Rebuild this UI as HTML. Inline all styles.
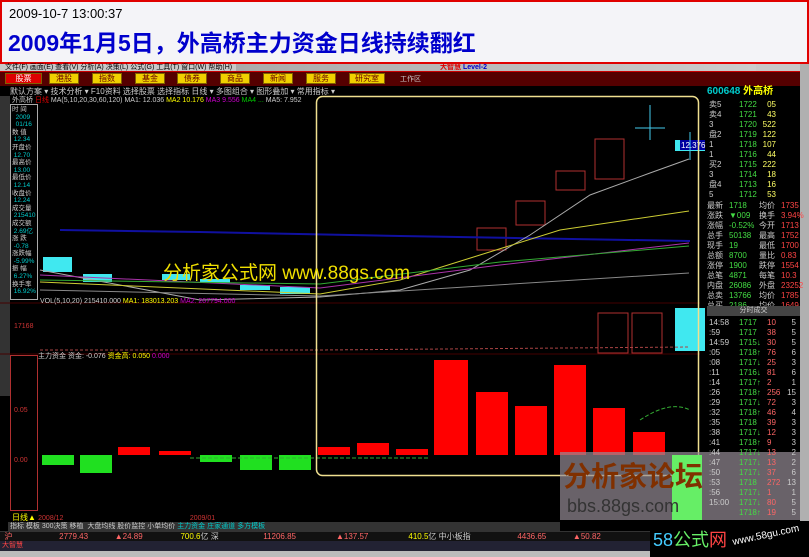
<!DOCTYPE html><html><head><meta charset="utf-8"><style>
*{margin:0;padding:0;box-sizing:border-box}
body{width:809px;height:557px;overflow:hidden;background:#000;position:relative;font-family:"Liberation Sans","Noto Sans CJK SC",sans-serif}
.a{position:absolute;white-space:nowrap}
.s{font-size:8px;line-height:9px}
.btn{position:absolute;top:73px;height:11px;width:30px;background:#f0d000;border:1px solid #806000;font-size:8px;line-height:9px;text-align:center;color:#600}
.rp{position:absolute;left:707px;width:93px;font-size:8px;line-height:10px;height:10px}
.rp span{position:absolute}
</style></head><body>
<div class="a" style="left:0;top:0;width:809px;height:64px;background:#f4f4f8;border:2px solid #e00000"></div>
<div class="a" style="left:9px;top:6px;font-size:13px;font-family:'Liberation Sans Narrow','Liberation Sans',sans-serif;color:#000">2009-10-7 13:00:37</div>
<div class="a" style="left:8px;top:24px;font-size:23px;font-weight:bold;color:#0000cc">2009年1月5日，外高桥主力资金日线持续翻红</div>
<div class="a" style="left:0;top:64px;width:809px;height:8px;background:#c8c8c8"></div>
<div class="a s" style="left:5px;top:63px;color:#000;font-size:7px">文件(F) 画面(E) 查看(V) 分析(A) 决策(L) 公式(G) 工具(T) 窗口(W) 帮助(H)</div>
<div class="a" style="left:236px;top:64px;width:520px;height:7px;background:linear-gradient(90deg,#aaa,#ccc)"></div>
<div class="a s" style="left:440px;top:63px;color:#d00;font-size:7px;font-weight:bold">大智慧 <span style="color:#00c">Level-2</span></div>
<div class="a" style="left:0;top:71px;width:800px;height:15px;background:#500;border-top:1px solid #c00"></div>
<div class="btn" style="left:5px;width:37px;background:#d00;color:#fff">股票</div>
<div class="btn" style="left:49px">港股</div><div class="btn" style="left:92px">指数</div><div class="btn" style="left:135px">基金</div><div class="btn" style="left:177px">债券</div><div class="btn" style="left:220px">商品</div><div class="btn" style="left:263px">新闻</div><div class="btn" style="left:306px">服务</div><div class="btn" style="left:349px;width:36px">研究室</div>
<div class="a s" style="left:400px;top:75px;color:#ccc;font-size:7px">工作区</div>
<div class="a" style="left:800px;top:64px;width:9px;height:480px;background:#b0b0b0"></div>
<div class="a s" style="left:10px;top:87px;color:#ccc">默认方案 ▾ 技术分析 ▾ F10资料 选择股票 选择指标 日线 ▾ 多图组合 ▾ 图形叠加 ▾ 常用指标 ▾</div>
<div class="a s" style="left:12px;top:96px;color:#ccc;font-size:7px">外高桥 <span style="color:#d00">日线</span> MA(5,10,20,30,60,120) MA1: 12.036 <span style="color:#ff0">MA2 10.176</span> <span style="color:#c0c">MA3 9.556</span> <span style="color:#0c0">MA4 ...</span> MA5: 7.952</div>
<div class="a" style="left:0;top:96px;width:10px;height:300px;background:#333"></div>
<div class="a" style="left:10px;top:104px;width:28px;height:196px;border:1px solid #aaa;background:#000"></div>
<div class="a" style="left:12px;top:106px;font-size:6.5px;line-height:7.6px;color:#ccc;white-space:pre">时 间
<span style="color:#0cc">  2009</span>
<span style="color:#0cc">  01/16</span>
数 值
<span style="color:#0cc"> 12.34</span>
开盘价
<span style="color:#0cc"> 12.70</span>
最高价
<span style="color:#0cc"> 13.00</span>
最低价
<span style="color:#0cc"> 12.14</span>
收盘价
<span style="color:#0cc"> 12.24</span>
成交量
<span style="color:#0cc"> 215410</span>
成交额
<span style="color:#0cc"> 2.69亿</span>
涨 跌
<span style="color:#0cc"> -0.78</span>
涨跌幅
<span style="color:#0cc"> -5.99%</span>
振 幅
<span style="color:#0cc"> 6.27%</span>
换手率
<span style="color:#0cc"> 16.92%</span></div>
<svg class="a" style="left:0;top:0" width="809" height="557">
<g fill="#40e8f0"><rect x="43" y="257" width="29" height="15"/><rect x="83" y="274" width="29" height="8"/><rect x="162" y="274" width="28" height="6"/><rect x="200" y="279" width="30" height="4"/><rect x="240" y="285" width="30" height="5"/><rect x="280" y="287" width="30" height="7"/><rect x="675" y="140" width="30" height="11"/><rect x="675" y="308" width="30" height="43"/></g>
<g fill="none" stroke="#b03030"><rect x="477" y="228" width="29" height="22"/><rect x="516" y="201" width="29" height="24"/><rect x="556" y="171" width="29" height="19"/><rect x="595" y="139" width="29" height="40"/><rect x="632" y="313" width="30" height="40"/><rect x="598" y="313" width="30" height="40"/><rect x="10.5" y="355.5" width="27" height="155"/></g>
<rect x="680" y="140" width="25" height="10" fill="#0000a0"/>
<text x="681" y="148" font-size="8" fill="#fff" font-family="Liberation Sans">12.376</text>
<g stroke="#4ce" fill="none"><path d="M635 128H665M650 105V140M690 132V160"/></g>
<path d="M60 230L200 232L400 236L690 241" stroke="#1010a0" stroke-width="2" fill="none"/>
<path d="M40 270L200 300L320 297L400 290L470 270L530 235L590 195L650 173L689 159" stroke="#aaa" fill="none"/>
<path d="M40 282L320 294L400 280L480 255L560 230L689 211" stroke="#cc3" fill="none"/>
<path d="M40 275L320 288L500 265L689 243" stroke="#a3a" fill="none"/>
<path d="M40 280L320 284L500 262L689 246" stroke="#3a3" fill="none"/>
<path d="M40 290L320 296L689 273" stroke="#888" fill="none"/>
<path d="M40 350L320 350L689 347" stroke="#a44" stroke-dasharray="3 2" fill="none"/>
<path d="M0 303H700M0 354H700" stroke="#400" fill="none"/>
<g fill="#f00"><rect x="434" y="360" width="34" height="95"/><rect x="476" y="392" width="32" height="63"/><rect x="515" y="406" width="32" height="49"/><rect x="554" y="365" width="32" height="90"/><rect x="593" y="408" width="32" height="47"/><rect x="633" y="432" width="32" height="23"/><rect x="318" y="447" width="32" height="8"/><rect x="357" y="443" width="32" height="12"/><rect x="396" y="449" width="32" height="6"/><rect x="118" y="447" width="32" height="8"/><rect x="159" y="451" width="32" height="4"/></g>
<g fill="#20e020"><rect x="42" y="455" width="32" height="10"/><rect x="80" y="455" width="32" height="18"/><rect x="200" y="455" width="32" height="7"/><rect x="240" y="455" width="32" height="15"/><rect x="279" y="455" width="32" height="15"/></g>
<path d="M190 458H430M640 420Q670 400 690 410" stroke="#3a3" stroke-dasharray="4 2" fill="none"/>
<rect x="316.5" y="96.5" width="382" height="379" rx="6" fill="none" stroke="#f0e090" stroke-width="1.5"/>
</svg>
<div class="a s" style="left:40px;top:297px;color:#ccc;font-size:7px">VOL(5,10,20) 215410.000 <span style="color:#ff0">MA1: 183013.203</span> <span style="color:#c0c">MA2: 207794.000</span></div>
<div class="a s" style="left:38px;top:352px;color:#ccc;font-size:7px">主力资金 资金: -0.076 <span style="color:#ff0">资金高: 0.050</span> <span style="color:#c0c">0.000</span></div>
<div class="a s" style="left:14px;top:322px;color:#c33;font-size:7px">17168</div>
<div class="a s" style="left:14px;top:406px;color:#c33;font-size:7px">0.05</div>
<div class="a s" style="left:14px;top:456px;color:#c33;font-size:7px">0.00</div>
<div class="a" style="left:163px;top:258px;font-size:19px;color:#f0e000">分析家公式网 www.88gs.com</div>
<div class="a" style="left:560px;top:452px;width:240px;height:68px;background:rgba(150,140,150,0.7)"></div>
<div class="a" style="left:672px;top:455px;width:30px;height:65px;background:#6e6"></div>
<div class="a" style="left:563px;top:455px;font-size:28px;font-weight:bold;color:#803000">分析家论坛</div>
<div class="a" style="left:567px;top:496px;font-size:18px;color:#333">bbs.88gs.com</div>
<div class="rp" style="top:86px;height:12px;left:707px;color:#0cc;font-size:10px;font-weight:bold;line-height:12px">600648 <span style="position:static;color:#ff0">外高桥</span></div>
<div id="rp"></div>
<div class="a" style="left:707px;top:306px;width:93px;height:10px;background:#444;font-size:7px;color:#ccc;text-align:center;line-height:10px">分时成交</div>
<div class="a" style="left:0;top:512px;width:560px;height:10px;font-size:8px;color:#ff0;padding-left:12px">日线▲ <span style="color:#c33;font-size:7px">2008/12 &nbsp;&nbsp;&nbsp;&nbsp;&nbsp;&nbsp;&nbsp;&nbsp;&nbsp;&nbsp;&nbsp;&nbsp;&nbsp;&nbsp;&nbsp;&nbsp;&nbsp;&nbsp;&nbsp;&nbsp;&nbsp;&nbsp;&nbsp;&nbsp;&nbsp;&nbsp;&nbsp;&nbsp;&nbsp;&nbsp;&nbsp;&nbsp;&nbsp;&nbsp;&nbsp;&nbsp;&nbsp;&nbsp;&nbsp;&nbsp;&nbsp;&nbsp;&nbsp;&nbsp;&nbsp;&nbsp;&nbsp;&nbsp;&nbsp;&nbsp;&nbsp;&nbsp;&nbsp;&nbsp;&nbsp;&nbsp;&nbsp;&nbsp;&nbsp;&nbsp;&nbsp;&nbsp;&nbsp; 2009/01</span></div>
<div class="a" style="left:8px;top:522px;width:552px;height:9px;background:#333;font-size:7px;line-height:9px;color:#ccc">&nbsp;指标 模板 300决策 移植 &nbsp;大盘均线 股价监控 小单均价 <span style="color:#0cc">主力资金 庄家通道 多方模板</span></div>
<div class="a" style="left:0;top:531px;width:800px;height:10px;background:#111;font-size:8px;line-height:10px;color:#ccc;border-top:1px solid #333">&nbsp;&nbsp;<span style="color:#f66">沪</span>&nbsp;&nbsp;&nbsp;&nbsp;&nbsp;&nbsp;&nbsp;&nbsp;&nbsp;&nbsp;&nbsp;&nbsp;&nbsp;&nbsp;&nbsp;&nbsp;&nbsp;&nbsp;&nbsp;&nbsp;&nbsp;<span style="color:#f66">2779.43</span>&nbsp;&nbsp;&nbsp;&nbsp;&nbsp;&nbsp;&nbsp;&nbsp;&nbsp;&nbsp;&nbsp;&nbsp;<span style="color:#f66">▲24.89</span>&nbsp;&nbsp;&nbsp;&nbsp;&nbsp;&nbsp;&nbsp;&nbsp;&nbsp;&nbsp;&nbsp;&nbsp;&nbsp;&nbsp;&nbsp;&nbsp;&nbsp;<span style="color:#ff0">700.6</span>亿 深&nbsp;&nbsp;&nbsp;&nbsp;&nbsp;&nbsp;&nbsp;&nbsp;&nbsp;&nbsp;&nbsp;&nbsp;&nbsp;&nbsp;&nbsp;&nbsp;&nbsp;&nbsp;&nbsp;&nbsp;<span style="color:#f66">11206.85</span>&nbsp;&nbsp;&nbsp;&nbsp;&nbsp;&nbsp;&nbsp;&nbsp;&nbsp;&nbsp;&nbsp;&nbsp;&nbsp;&nbsp;&nbsp;&nbsp;&nbsp;&nbsp;<span style="color:#f66">▲137.57</span>&nbsp;&nbsp;&nbsp;&nbsp;&nbsp;&nbsp;&nbsp;&nbsp;&nbsp;&nbsp;&nbsp;&nbsp;&nbsp;&nbsp;&nbsp;&nbsp;&nbsp;&nbsp;<span style="color:#ff0">410.5</span>亿 中小板指&nbsp;&nbsp;&nbsp;&nbsp;&nbsp;&nbsp;&nbsp;&nbsp;&nbsp;&nbsp;&nbsp;&nbsp;&nbsp;&nbsp;&nbsp;&nbsp;&nbsp;&nbsp;&nbsp;&nbsp;&nbsp;<span style="color:#f66">4436.65</span>&nbsp;&nbsp;&nbsp;&nbsp;&nbsp;&nbsp;&nbsp;&nbsp;&nbsp;&nbsp;&nbsp;&nbsp;<span style="color:#f66">▲50.82</span></div>
<div class="a" style="left:0;top:541px;width:809px;height:10px;background:#223;font-size:7px;color:#f44;line-height:10px">&nbsp;大智慧</div>
<div class="a" style="left:0;top:551px;width:809px;height:6px;background:#bbb"></div>
<div class="a" style="left:650px;top:521px;width:159px;height:36px;background:#000"></div>
<div class="a" style="left:653px;top:526px;font-size:18px;color:#4cf">58<span style="color:#6e6">公式</span><span style="color:#f44">网</span></div>
<div class="a" style="left:732px;top:530px;font-size:10px;color:#fff;transform:rotate(-12deg)">www.58gu.com</div>
<script>
var rows=[["卖5","1722","05"],["卖4","1721","43"],["3","1720","522"],["盘2","1719","122"],["1","1718","107"],["1","1716","44"],["买2","1715","222"],["3","1714","18"],["盘4","1713","16"],["5","1712","53"]];
var h="";rows.forEach(function(r,i){var t=100+i*10;h+='<div class="rp" style="top:'+t+'px"><span style="left:2px;color:#ccc">'+r[0]+'</span><span style="left:32px;color:#4d4">'+r[1]+'</span><span style="right:24px;color:#ff6">'+r[2]+'</span></div>';});
var b=[["最新","1718","均价","1735"],["涨跌","▼009","换手","3.94%"],["涨幅","-0.52%","今开","1713"],["总手","50138","最高","1752"],["现手","19","最低","1700"],["总额","8700","量比","0.83"],["涨停","1900","跌停","1554"],["总笔","4871","每笔","10.3"],["内盘","26086","外盘","23252"],["总卖","13766","均价","1785"],["总买","2186","均价","1649"]];
b.forEach(function(r,i){var t=201+i*10;h+='<div class="rp" style="top:'+t+'px"><span style="left:0;color:#ccc">'+r[0]+'</span><span style="left:22px;color:#4d4">'+r[1]+'</span><span style="left:52px;color:#ccc">'+r[2]+'</span><span style="left:74px;color:#f44">'+r[3]+'</span></div>';});
var tr=[["14:58","1717","10","5"],[":59","1717","38","5"],["14:59","1715↓","30","5"],[":05","1718↑","76","6"],[":08","1717↓","25","3"],[":11","1716↓","81","6"],[":14","1717↑","2","1"],[":26","1718↑","256","15"],[":29","1717↓","72","3"],[":32","1718↑","46","4"],[":35","1718","39","3"],[":38","1717↓","12","3"],[":41","1718↑","9","3"],[":44","1717↓","13","2"],[":47","1717↓","13","2"],[":50","1717↓","37","6"],[":53","1718","272","13"],[":56","1717↓","1","1"],["15:00","1717↓","80","5"],["","1718↑","19","5"]];
tr.forEach(function(r,i){var t=318+i*10;h+='<div class="rp" style="top:'+t+'px"><span style="left:2px;color:#ccc">'+r[0]+'</span><span style="left:32px;color:#4d4">'+r[1]+'</span><span style="left:60px;color:#f66">'+r[2]+'</span><span style="right:4px;color:#ccc">'+r[3]+'</span></div>';});
document.getElementById('rp').innerHTML=h;
</script>
</body></html>
